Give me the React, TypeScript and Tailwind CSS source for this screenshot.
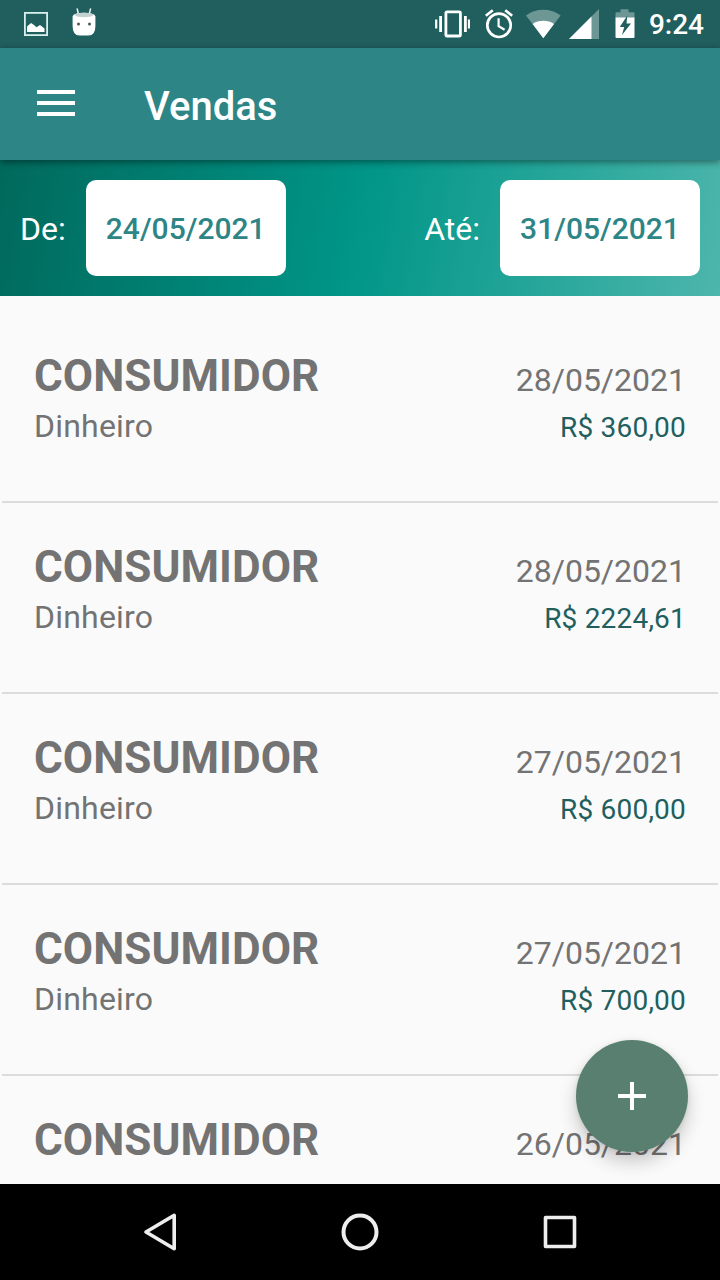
interface Sale {
  id: number;
  customer: string;
  date: string;
  payment?: string;
  total?: string;
}

const sales: Sale[] = [
  { id: 1, customer: 'CONSUMIDOR', payment: 'Dinheiro', date: '28/05/2021', total: 'R$ 360,00' },
  { id: 2, customer: 'CONSUMIDOR', payment: 'Dinheiro', date: '28/05/2021', total: 'R$ 2224,61' },
  { id: 3, customer: 'CONSUMIDOR', payment: 'Dinheiro', date: '27/05/2021', total: 'R$ 600,00' },
  { id: 4, customer: 'CONSUMIDOR', payment: 'Dinheiro', date: '27/05/2021', total: 'R$ 700,00' },
  { id: 5, customer: 'CONSUMIDOR', date: '26/05/2021' },
];

function StatusBar() {
  return (
    <div className="h-12 shrink-0 flex items-center justify-between bg-[#215f5f] pl-6 pr-4 text-white">
      <div className="flex items-center gap-6">
        <svg width="24" height="48" viewBox="0 0 24 48" fill="none">
          <rect x="0.9" y="12.9" width="22.2" height="22.2" stroke="#d5efec" strokeWidth="1.8" />
          <path d="M3 32v-5.500l4-3.600 3 2 2.500 2.300 3.500-2.200 4.500 3.500V32z" fill="#fff" />
        </svg>
        <svg width="24" height="48" viewBox="0 0 24 48">
          <path d="M5.2 9l1.5 6M18.500 9l-1.5 6" stroke="#e6f3f2" strokeWidth="1.5" strokeLinecap="round" />
          <path d="M.6 16.500Q1.300 12.800 12 12.800t11.400 3.700V26q0 9.500-7 9.500H7.600q-7 0-7-9.500z" fill="#fff" />
          <path d="M2.500 15Q4 12.800 12 12.800T21.500 15Q19 17.200 12 17.200T2.500 15z" fill="#c3d1d0" />
          <circle cx="6.500" cy="24" r="1.500" fill="#4b5655" />
          <circle cx="17.500" cy="24" r="1.500" fill="#4b5655" />
        </svg>
      </div>
      <div className="flex items-center">
        <svg width="36" height="48" viewBox="0 0 36 48" fill="none" stroke="#fff">
          <rect x="11.900" y="11.800" width="14.500" height="24.200" rx="1.200" strokeWidth="2.800" />
          <path d="M2.200 19.500v9M35 19.500v9" strokeWidth="2.200" />
          <path d="M6.600 16v16M31.400 16v16" strokeWidth="2.800" />
        </svg>
        <svg className="ml-[15px]" width="28" height="48" viewBox="0 0 28 48" fill="none" stroke="#fff">
          <circle cx="14" cy="25.300" r="11.700" strokeWidth="2.700" />
          <path d="M.8 15.800l7-5.600M27.200 15.800l-7-5.600" strokeWidth="2.700" />
          <path d="M13.600 18.200v8l6 3.600" strokeWidth="2.200" />
        </svg>
        <svg className="ml-[13px]" width="35" height="48" viewBox="0 0 35 48">
          <path d="M17.300 38.300L0 15.600Q7.500 9.800 17.300 9.800T34.600 15.600z" fill="#6c9794" />
          <path d="M17.300 38.300L6.600 24Q11 20.700 17.300 20.700T28 24z" fill="#fff" />
        </svg>
        <svg className="ml-2" width="30" height="48" viewBox="0 0 30 48">
          <path d="M0 39L30 9v30z" fill="#6c9794" />
          <path d="M0 39L22.500 16.500V39z" fill="#fff" />
        </svg>
        <svg className="ml-4" width="20" height="48" viewBox="0 0 20 48">
          <path d="M1.500 12.300h4V9.300h8v3h5q1 0 1 1V18H.5v-4.700q0-1 1-1z" fill="#6c9794" />
          <path d="M.5 17.500h19V37q0 1-1 1h-17q-1 0-1-1z" fill="#fff" />
          <path d="M12.300 15.500L4.800 27h4.400L7 35l9-11.500h-4.500z" fill="#215f5f" />
        </svg>
        <span className="ml-3.5 pt-0.5 text-[28px] leading-[50px] font-medium">9:24</span>
      </div>
    </div>
  );
}

function Header() {
  return (
    <header className="relative z-10 h-28 shrink-0 flex items-center bg-[#2d8585] pl-[37px] text-white shadow-[0_2px_7px_rgba(0,0,0,0.45)]">
      <button className="flex flex-col gap-[7px] -mt-0.5" aria-label="Menu">
        <span className="w-[38px] h-1 bg-white" />
        <span className="w-[38px] h-1 bg-white" />
        <span className="w-[38px] h-1 bg-white" />
      </button>
      <h1 className="ml-[69px] mt-1.5 text-[40px] leading-[48px] font-medium">Vendas</h1>
    </header>
  );
}

function DateField({ label, value }: { label: string; value: string }) {
  return (
    <div className="flex items-center gap-5">
      <span className="pt-0.5 text-[32px] leading-[40px] text-white">{label}</span>
      <button className="w-[200px] h-24 rounded-[10px] bg-white text-[30px] font-medium text-[#2d8585]">
        {value}
      </button>
    </div>
  );
}

function SaleRow({ sale }: { sale: Sale }) {
  return (
    <li className="h-[191px] shrink-0 mx-0.5 px-8 flex justify-between border-b-2 border-[#dcdcdc] text-[#737373]">
      <div className="pt-[35px]">
        <p className="text-[44px] leading-[58px] font-bold tracking-[0.05px]">{sale.customer}</p>
        {sale.payment && <p className="text-[32px] leading-[42px] tracking-[0.2px]">{sale.payment}</p>}
      </div>
      <div className="pt-[47px] text-right">
        <p className="text-[32px] leading-[42px]">{sale.date}</p>
        {sale.total && (
          <p className="text-[28px] leading-[54px] tracking-[0.2px] text-[#215f5f]">{sale.total}</p>
        )}
      </div>
    </li>
  );
}

function NavigationBar() {
  return (
    <nav className="h-24 shrink-0 flex items-center justify-center gap-[152px] bg-black">
      <svg width="48" height="48" viewBox="0 0 48 48" fill="none" stroke="#eee" strokeWidth="3.600" strokeLinejoin="round">
        <path d="M38.200 7.300v33.400L10 24z" />
      </svg>
      <svg width="48" height="48" viewBox="0 0 48 48" fill="none" stroke="#eee" strokeWidth="4">
        <circle cx="24" cy="24" r="16.500" />
      </svg>
      <svg width="48" height="48" viewBox="0 0 48 48" fill="none" stroke="#eee" strokeWidth="3.600" strokeLinejoin="round">
        <rect x="9.500" y="9.500" width="29" height="29" />
      </svg>
    </nav>
  );
}

export default function App() {
  return (
    <div className="w-[720px] h-[1280px] flex flex-col overflow-hidden bg-[#fafafa] font-[Roboto,sans-serif]">
      <StatusBar />
      <Header />
      <section className="h-[136px] shrink-0 flex items-center justify-between px-5 bg-[linear-gradient(100.7deg,#00695c_0%,#009688_50%,#4db6ac_100%)]">
        <DateField label="De:" value="24/05/2021" />
        <DateField label="Até:" value="31/05/2021" />
      </section>
      <main className="relative flex-1 min-h-0 overflow-hidden">
        <ul className="flex flex-col pt-4">
          {sales.map((sale) => (
            <SaleRow key={sale.id} sale={sale} />
          ))}
        </ul>
        <button
          className="absolute right-8 bottom-8 size-28 rounded-full flex items-center justify-center bg-[#587f70] shadow-[0_10px_18px_rgba(0,0,0,0.2),0_1px_5px_rgba(0,0,0,0.1)]"
          aria-label="Nova venda"
        >
          <svg width="28" height="28" viewBox="0 0 28 28" fill="#fff">
            <path d="M12 0h4v12h12v4H16v12h-4V16H0v-4h12z" />
          </svg>
        </button>
      </main>
      <NavigationBar />
    </div>
  );
}
